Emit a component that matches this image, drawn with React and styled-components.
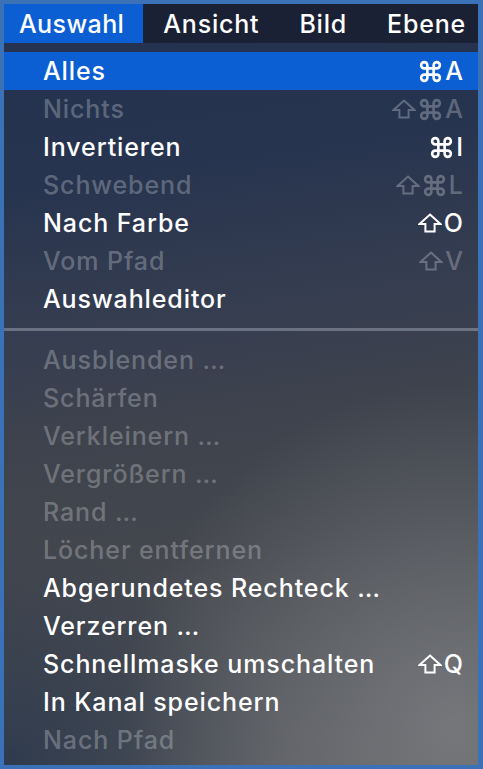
import React from "react";
import styled, { createGlobalStyle } from "styled-components";
import { Command } from "lucide-react";

const GlobalStyle = createGlobalStyle`
  html, body {
    margin: 0;
    padding: 0;
    background: #3a71b7;
  }
  body {
    font-family: Inter, "Noto Sans", "Liberation Sans", sans-serif;
    -webkit-font-smoothing: antialiased;
  }
`;

const menuTitles = ["Auswahl", "Ansicht", "Bild", "Ebene"];

const topItems = [
  { label: "Alles", keys: "⌘A", active: true },
  { label: "Nichts", keys: "⇧⌘A", disabled: true },
  { label: "Invertieren", keys: "⌘I" },
  { label: "Schwebend", keys: "⇧⌘L", disabled: true },
  { label: "Nach Farbe", keys: "⇧O" },
  { label: "Vom Pfad", keys: "⇧V", disabled: true },
  { label: "Auswahleditor" },
];

const bottomItems = [
  { label: "Ausblenden …", disabled: true },
  { label: "Schärfen", disabled: true },
  { label: "Verkleinern …", disabled: true },
  { label: "Vergrößern …", disabled: true },
  { label: "Rand …", disabled: true },
  { label: "Löcher entfernen", disabled: true },
  { label: "Abgerundetes Rechteck …" },
  { label: "Verzerren …" },
  { label: "Schnellmaske umschalten", keys: "⇧Q" },
  { label: "In Kanal speichern" },
  { label: "Nach Pfad", disabled: true },
];

// outlined shift arrow, like the mac menu glyph
const ShiftIcon = () => (
  <svg width="24" height="20" viewBox="0 0 24 20" fill="none">
    <path
      d="M12 1.6 L22.4 11 H16.6 V18.6 H7.4 V11 H1.6 Z"
      stroke="currentColor"
      strokeWidth="2"
      strokeLinejoin="miter"
    />
  </svg>
);

const KeyGlyph = ({ char }) => {
  if (char === "⇧") return <ShiftIcon />;
  if (char === "⌘") return <Command size={25} strokeWidth={2.5} />;
  return <KeyChar>{char}</KeyChar>;
};

const MenuItem = ({ label, keys, active, disabled }) => (
  <Row $active={active} $disabled={disabled}>
    <Label>{label}</Label>
    {keys && (
      <Keys>
        {[...keys].map((c, i) => (
          <KeyGlyph key={i} char={c} />
        ))}
      </Keys>
    )}
  </Row>
);

const App = () => {
  return (
    <>
      <GlobalStyle />
      <Frame>
        <Window>
          <MenuBar>
            {menuTitles.map((title, i) => (
              <MenuTitle key={title} $active={i === 0}>
                {title}
              </MenuTitle>
            ))}
          </MenuBar>
          <Dropdown>
            {topItems.map((item) => (
              <MenuItem key={item.label} {...item} />
            ))}
            <Separator />
            {bottomItems.map((item) => (
              <MenuItem key={item.label} {...item} />
            ))}
          </Dropdown>
        </Window>
      </Frame>
    </>
  );
};

export default App;

const Frame = styled.div`
  width: 483px;
  height: 769px;
  box-sizing: border-box;
  padding: 4px 5px 4px 4px;
  background: #3a71b7;
`;

const Window = styled.div`
  height: 100%;
  display: flex;
  flex-direction: column;
  background:
    radial-gradient(ellipse 70% 45% at 95% 95%, rgba(120, 122, 126, 0.9), rgba(120, 122, 126, 0) 100%),
    radial-gradient(ellipse 60% 30% at 0% 100%, rgba(38, 52, 74, 0.8), rgba(38, 52, 74, 0) 100%),
    linear-gradient(172deg, #243250 0%, #27344f 22%, #353d50 40%, #3f434d 55%, #44474e 70%, #4d5055 85%, #56585c 100%);
`;

const MenuBar = styled.div`
  display: flex;
  height: 39px;
  background: #1a2135;
`;

const MenuTitle = styled.div`
  display: flex;
  align-items: center;
  padding: ${(p) => (p.$active ? "0 19px 0 15px" : "0 19px 0 20px")};
  margin-right: ${(p) => (p.$active ? "0" : "1px")};
  font-size: 25px;
  font-weight: 500;
  letter-spacing: ${(p) => (p.$active ? "0.4px" : "0.8px")};
  color: #fff;
  background: ${(p) => (p.$active ? "#0b5fd3" : "transparent")};
`;

const Dropdown = styled.div`
  display: flex;
  flex-direction: column;
  padding-top: 9px;
`;

const Row = styled.div`
  display: flex;
  align-items: center;
  justify-content: space-between;
  height: 38px;
  padding: 0 15px 0 39px;
  font-size: 25px;
  font-weight: 500;
  letter-spacing: 0.9px;
  color: ${(p) => (p.$disabled ? "rgba(255, 255, 255, 0.27)" : "#fff")};
  background: ${(p) => (p.$active ? "#0b5fd3" : "transparent")};
`;

const Label = styled.span`
  white-space: nowrap;
`;

const Keys = styled.span`
  display: flex;
  align-items: center;
  gap: 2px;
  white-space: nowrap;
`;

const KeyChar = styled.span`
  letter-spacing: 0;
`;

const Separator = styled.div`
  height: 3px;
  margin: 10px 0;
  background: rgba(150, 158, 172, 0.55);
`;
